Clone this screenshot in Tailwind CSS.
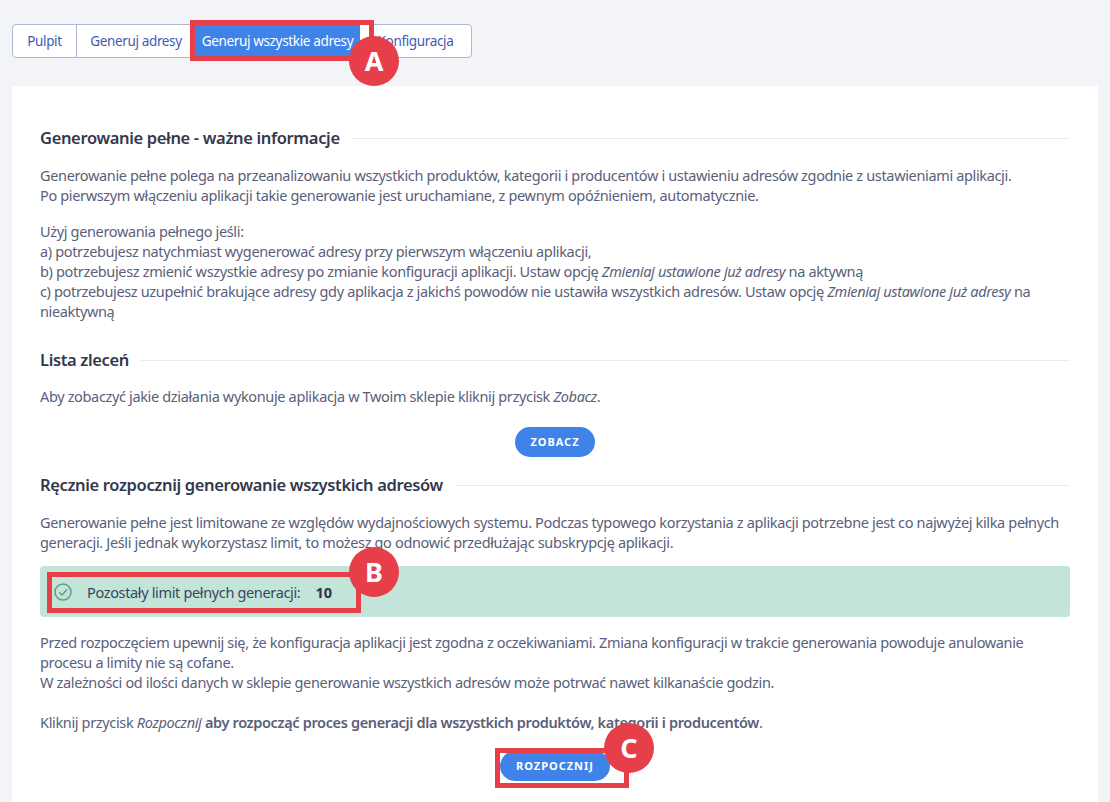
<!DOCTYPE html>
<html lang="pl">
<head>
  <meta charset="UTF-8" />
  <title>Generuj wszystkie adresy</title>
  <script src="https://cdn.jsdelivr.net/npm/@tailwindcss/browser@4"></script>
</head>
<body class="bg-[#f3f4f8] font-['Source_Sans_Pro','Noto_Sans',sans-serif] text-[14.5px] leading-[20px] text-[#5a607a] tracking-[-0.35px] h-[802px] overflow-hidden relative">
  <!-- tabs -->
  <div class="pl-3 pt-6 h-[86px]">
    <div class="inline-flex h-[34px] items-stretch bg-white border border-[#aeb6d2] rounded text-[#3f5bb5] text-[13.5px]">
      <a class="flex items-center justify-center w-[64px] border-r border-[#aeb6d2]">Pulpit</a>
      <a class="flex items-center justify-center w-[118px]">Generuj adresy</a>
      <a class="flex items-center justify-center w-[165px] bg-[#3f83e8] text-white">Generuj wszystkie adresy</a>
      <a class="flex items-center justify-center w-[111px]">Konfiguracja</a>
    </div>
  </div>

  <!-- panel -->
  <div class="mx-3 bg-white px-7 pt-[42px] h-[716px]">
    <div class="flex items-center gap-3 h-5">
      <h2 class="text-[16.5px] font-semibold text-[#33384d] whitespace-nowrap">Generowanie pełne - ważne informacje</h2>
      <div class="flex-1 h-px bg-[#e9eaee]"></div>
    </div>
    <p class="mt-[17px]">Generowanie pełne polega na przeanalizowaniu wszystkich produktów, kategorii i producentów i ustawieniu adresów zgodnie z ustawieniami aplikacji.<br>Po pierwszym włączeniu aplikacji takie generowanie jest uruchamiane, z pewnym opóźnieniem, automatycznie.</p>
    <p class="mt-[16px]">Użyj generowania pełnego jeśli:<br>a) potrzebujesz natychmiast wygenerować adresy przy pierwszym włączeniu aplikacji,<br>b) potrzebujesz zmienić wszystkie adresy po zmianie konfiguracji aplikacji. Ustaw opcję <em>Zmieniaj ustawione już adresy</em> na aktywną<br>c) potrzebujesz uzupełnić brakujące adresy gdy aplikacja z jakichś powodów nie ustawiła wszystkich adresów. Ustaw opcję <em>Zmieniaj ustawione już adresy</em> na nieaktywną</p>

    <div class="flex items-center gap-3 h-5 mt-[29px]">
      <h2 class="text-[16.5px] font-semibold text-[#33384d] whitespace-nowrap">Lista zleceń</h2>
      <div class="flex-1 h-px bg-[#e9eaee]"></div>
    </div>
    <p class="mt-[16px]">Aby zobaczyć jakie działania wykonuje aplikacja w Twoim sklepie kliknij przycisk <em>Zobacz</em>.</p>
    <div class="flex justify-center mt-[21px]">
      <button class="w-[80px] h-[30px] rounded-full bg-[#3f83e8] text-white text-[11px] font-bold tracking-[1px]">ZOBACZ</button>
    </div>

    <div class="flex items-center gap-3 h-5 mt-[18px]">
      <h2 class="text-[16.5px] font-semibold text-[#33384d] whitespace-nowrap">Ręcznie rozpocznij generowanie wszystkich adresów</h2>
      <div class="flex-1 h-px bg-[#e9eaee]"></div>
    </div>
    <p class="mt-[17px]">Generowanie pełne jest limitowane ze względów wydajnościowych systemu. Podczas typowego korzystania z aplikacji potrzebne jest co najwyżej kilka pełnych generacji. Jeśli jednak wykorzystasz limit, to możesz go odnowić przedłużając subskrypcję aplikacji.</p>
    <div class="flex items-center h-[51px] mt-[14px] pl-[14px] bg-[#c3e4d9] rounded-sm text-[#3a4560]">
      <svg class="w-[18px] h-[18px] text-[#5f9c88]" viewBox="0 0 18 18" fill="none" stroke="currentColor" stroke-width="1.5"><circle cx="9" cy="9" r="8"/><path d="M5.2 9.2l2.8 2.8 5-5.4"/></svg>
      <span class="ml-[15px]">Pozostały limit pełnych generacji:</span>
      <span class="ml-[15px] font-bold text-[#2b3550] tracking-normal">10</span>
    </div>
    <p class="mt-[15px]">Przed rozpoczęciem upewnij się, że konfiguracja aplikacji jest zgodna z oczekiwaniami. Zmiana konfiguracji w trakcie generowania powoduje anulowanie procesu a limity nie są cofane.<br>W zależności od ilości danych w sklepie generowanie wszystkich adresów może potrwać nawet kilkanaście godzin.</p>
    <p class="mt-[20px]">Kliknij przycisk <em>Rozpocznij</em> <strong class="font-semibold">aby rozpocząć proces generacji dla wszystkich produktów, kategorii i producentów</strong>.</p>
    <div class="flex justify-center mt-[19px]">
      <button class="w-[110px] h-[30px] rounded-full bg-[#3f83e8] text-white text-[11px] font-bold tracking-[1px]">ROZPOCZNIJ</button>
    </div>
  </div>

  <!-- callouts -->
  <div class="absolute left-[190px] top-[20px] w-[184px] h-[41px] border-[5px] border-[#e63f49]"></div>
  <div class="absolute left-[349px] top-[36px] w-[50px] h-[50px] rounded-full bg-[#e63f49] text-white text-[27px] font-bold flex items-center justify-center tracking-normal">A</div>
  <div class="absolute left-[47px] top-[572px] w-[314px] h-[41px] border-[5px] border-[#e63f49]"></div>
  <div class="absolute left-[349px] top-[547px] w-[50px] h-[50px] rounded-full bg-[#e63f49] text-white text-[27px] font-bold flex items-center justify-center tracking-normal">B</div>
  <div class="absolute left-[495px] top-[748px] w-[134px] h-[40px] border-[5px] border-[#e63f49]"></div>
  <div class="absolute left-[604px] top-[723px] w-[50px] h-[50px] rounded-full bg-[#e63f49] text-white text-[27px] font-bold flex items-center justify-center tracking-normal">C</div>
</body>
</html>
